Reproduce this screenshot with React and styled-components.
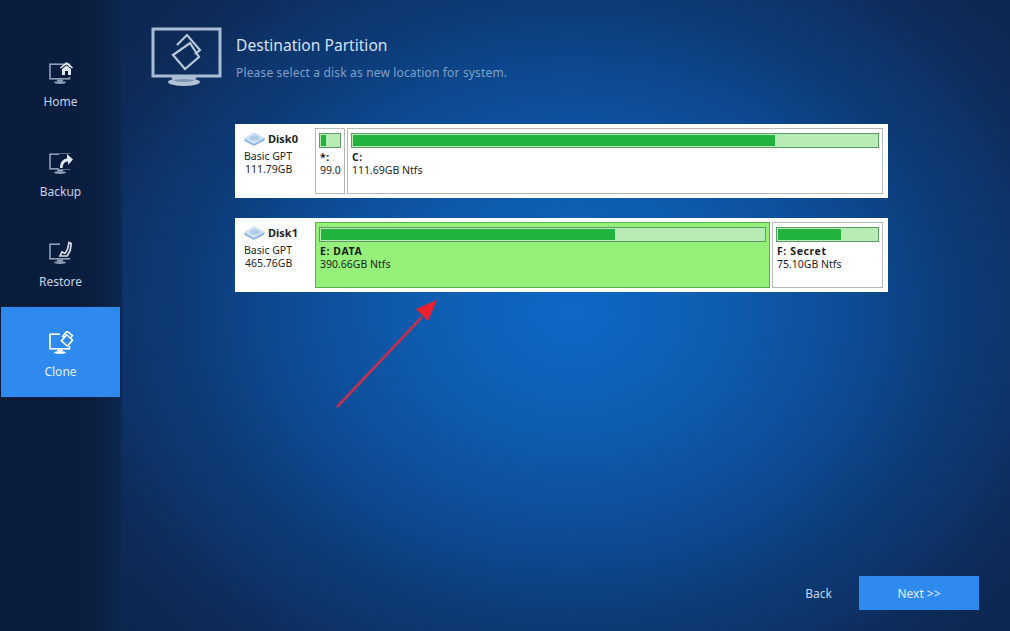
import React from "react";
import styled, { createGlobalStyle } from "styled-components";

const Global = createGlobalStyle`
  html, body { margin: 0; padding: 0; height: 631px; overflow: hidden; background: #0b1c3a; }
  #root { height: 631px; }
`;

const Window = styled.div`
  position: relative;
  width: 1010px;
  height: 631px;
  display: flex;
  overflow: hidden;
  font-family: "Noto Sans", "Open Sans", sans-serif;
`;

const Sidebar = styled.nav`
  width: 122px;
  flex: none;
  padding: 37px 0 0 1px;
  box-sizing: border-box;
  border-right: 2px solid #0d294f;
  background: linear-gradient(90deg, #0a1c3c 0%, #0a1d3e 70%, #0c274d 100%);
`;

const NavItem = styled.div`
  width: 119px;
  height: 90px;
  box-sizing: border-box;
  padding-top: 24px;
  display: flex;
  flex-direction: column;
  align-items: center;
  gap: 8px;
  color: ${p => (p.$active ? "#e6f1ff" : "#c4d3e6")};
  background: ${p => (p.$active ? "#2f8af0" : "transparent")};
  font-size: 12px;
  line-height: 17px;
`;

const Main = styled.main`
  flex: 1;
  display: flex;
  flex-direction: column;
  padding: 27px 31px 21px 29px;
  box-sizing: border-box;
  background:
    radial-gradient(ellipse 500px 400px at 450px 312px, #0f68c6 0%, #0e5cb0 30%, #0d4a92 58%, #0d3a76 78%, rgba(13,48,98,0) 100%),
    radial-gradient(ellipse 640px 520px at 450px 312px, #0d3a76 0%, #0d3369 60%, #0e2348 100%);
`;

const Header = styled.header`
  display: flex;
  align-items: flex-start;
  gap: 13px;
  height: 97px;
`;

const HeaderText = styled.div`
  padding-top: 7px;
`;

const Title = styled.h1`
  margin: 0;
  font-size: 15.6px;
  font-weight: 400;
  line-height: 22px;
  color: #d3e1f3;
`;

const Subtitle = styled.p`
  margin: 9px 0 0;
  font-size: 12px;
  line-height: 16px;
  letter-spacing: 0.16px;
  color: #7fa0c8;
`;

const DiskList = styled.div`
  margin-left: 84px;
  width: 653px;
  display: flex;
  flex-direction: column;
  gap: 20px;
`;

const DiskPanel = styled.section`
  height: 74px;
  box-sizing: border-box;
  background: #fff;
  display: flex;
  padding: 4px 5px 4px 0;
  gap: 2px;
  color: #1d1d1d;
  font-family: "Noto Sans", sans-serif;
  font-size: 10.5px;
  line-height: 13px;
`;

const DiskInfo = styled.div`
  width: 78px;
  flex: none;
  padding: 3px 0 0 9px;
  box-sizing: border-box;
`;

const DiskName = styled.div`
  display: flex;
  align-items: center;
  gap: 3px;
  height: 15px;
  font-weight: 700;
  font-size: 11px;
  margin-bottom: 4px;
`;

const DiskMeta = styled.div`
  white-space: nowrap;
`;

const DiskSize = styled.div`
  padding-left: 1px;
`;

const Partition = styled.div`
  flex: ${p => (p.$width ? `0 0 ${p.$width}px` : "1")};
  min-width: 0;
  box-sizing: border-box;
  border: 1px solid ${p => (p.$selected ? "#5fae4c" : "#b5bab5")};
  background: ${p => (p.$selected ? "#95f07a" : "#fff")};
  padding: 4px 3px 0;
  white-space: nowrap;
`;

const Usage = styled.div`
  height: 15px;
  box-sizing: border-box;
  border: 1px solid #5d9a6a;
  padding: 1px;
  background: #b9ecb4;
  margin-bottom: 3px;
`;

const UsageFill = styled.div`
  height: 100%;
  background: #22b33f;
`;

const PartName = styled.div`
  font-weight: 700;
  letter-spacing: 0.6px;
  padding-left: 1px;
`;

const PartDetail = styled.div`
  overflow: hidden;
  padding-left: 1px;
`;

const Footer = styled.footer`
  margin-top: auto;
  display: flex;
  justify-content: flex-end;
  align-items: center;
  gap: 27px;
  font-size: 12px;
`;

const BackButton = styled.div`
  color: #c4d5ea;
`;

const NextButton = styled.div`
  width: 120px;
  height: 34px;
  display: flex;
  align-items: center;
  justify-content: center;
  background: #2f8af0;
  color: #e0eeff;
`;

const Arrow = styled.svg`
  position: absolute;
  left: 330px;
  top: 295px;
`;

const Monitor = () => (
  <svg width="72" height="60" viewBox="0 0 72 60" style={{ flex: "none" }}>
    <rect x="2" y="2" width="67" height="47" fill="none" stroke="#a9bdd4" strokeWidth="3" />
    <path d="M21 50h24v2H21z" fill="#a9bdd4" />
    <ellipse cx="33" cy="55" rx="16" ry="4" fill="#b2c3d6" />
    <ellipse cx="33" cy="53.500" rx="10" ry="1.500" fill="#7d92ad" />
    <path d="M26 18L36 8l13 15-5 4" fill="none" stroke="#b8c9dc" strokeWidth="2.200" />
    <path d="M22 28L39 16 48 30 34 42z" fill="none" stroke="#b8c9dc" strokeWidth="2.200" />
  </svg>
);

const NavMonitor = ({ color = "#8fa0b6" }) => (
  <>
    <rect x="2" y="3.200" width="19.500" height="14.600" fill="none" stroke={color} strokeWidth="1.600" />
    <path d="M9 18.500h6v1.500H9z" fill={color} />
    <ellipse cx="12" cy="21.500" rx="6" ry="1.400" fill={color} />
  </>
);

const NavIcon = ({ kind, active }) => (
  <svg width="26" height="24" viewBox="0 0 26 24">
    <NavMonitor color={active ? "#fff" : "#8fa0b6"} />
    {kind === "home" && (
      <g>
        <path d="M11 6h15v10H11z" fill="#0a1d3e" />
        <path d="M12 6.500L18.500 1l6.500 5.500-1 1-5.500-4.500-5.500 4.500z" fill="#eef4fb" />
        <path d="M14 8l4.500-3.800L23 8v6h-3v-4h-3v4h-3z" fill="#dfe8f3" />
      </g>
    )}
    {kind === "backup" && (
      <g>
        <path d="M11 3h15v15H11z" fill="#0a1d3e" />
        <path d="M12 17c0-6 3-9 7-9.500V3l6 5.500-5 5.500v-3.500c-3 0-5 2-5.500 6.500z" fill="#dfe8f3" />
      </g>
    )}
    {kind === "restore" && (
      <g>
        <path d="M12 1h12v16H12z" fill="#0a1d3e" />
        <path d="M21 1.500l2.200 1-1 7-3 5.500H12l2-4 3 1.500 2.500-4z" fill="none" stroke="#d6dfea" strokeWidth="1.700" />
      </g>
    )}
    {kind === "clone" && (
      <g>
        <path d="M12 0h14v15H12z" fill="#2f8af0" />
        <rect x="16" y="1.500" width="7" height="7" transform="rotate(40 19.500 5)" fill="none" stroke="#fff" strokeWidth="1.500" />
        <rect x="15" y="5.500" width="8" height="8" transform="rotate(40 19 9.500)" fill="#2f8af0" stroke="#fff" strokeWidth="1.600" />
      </g>
    )}
  </svg>
);

const DiskIcon = () => (
  <svg width="21" height="14" viewBox="0 0 21 14" style={{ flex: "none" }}>
    <path d="M0.500 6.500L10 0.500 20.500 6v2.500L10 14 0.500 9z" fill="#8fb6e2" />
    <path d="M0.500 6.500L10 0.500 20.500 6 10 12z" fill="#d2e3f6" />
    <ellipse cx="10.500" cy="6" rx="5" ry="2.500" fill="#aecbea" />
  </svg>
);

const nav = [
  { kind: "home", label: "Home" },
  { kind: "backup", label: "Backup" },
  { kind: "restore", label: "Restore" },
  { kind: "clone", label: "Clone", active: true },
];

const disks = [
  {
    name: "Disk0",
    size: "111.79GB",
    parts: [
      { name: "*:", detail: "99.00MB", used: 26, width: 30 },
      { name: "C:", detail: "111.69GB Ntfs", used: 80.5 },
    ],
  },
  {
    name: "Disk1",
    size: "465.76GB",
    parts: [
      { name: "E: DATA", detail: "390.66GB Ntfs", used: 66.4, width: 455, selected: true },
      { name: "F: Secret", detail: "75.10GB Ntfs", used: 64 },
    ],
  },
];

export default function App() {
  return (
    <Window>
      <Global />
      <Sidebar>
        {nav.map(n => (
          <NavItem key={n.kind} $active={n.active}>
            <NavIcon kind={n.kind} active={n.active} />
            {n.label}
          </NavItem>
        ))}
      </Sidebar>
      <Main>
        <Header>
          <Monitor />
          <HeaderText>
            <Title>Destination Partition</Title>
            <Subtitle>Please select a disk as new location for system.</Subtitle>
          </HeaderText>
        </Header>
        <DiskList>
          {disks.map(d => (
            <DiskPanel key={d.name}>
              <DiskInfo>
                <DiskName><DiskIcon />{d.name}</DiskName>
                <DiskMeta>Basic GPT</DiskMeta>
                <DiskSize>{d.size}</DiskSize>
              </DiskInfo>
              {d.parts.map(p => (
                <Partition key={p.name} $width={p.width} $selected={p.selected}>
                  <Usage><UsageFill style={{ width: `${p.used}%` }} /></Usage>
                  <PartName>{p.name}</PartName>
                  <PartDetail>{p.detail}</PartDetail>
                </Partition>
              ))}
            </DiskPanel>
          ))}
        </DiskList>
        <Footer>
          <BackButton>Back</BackButton>
          <NextButton>Next &gt;&gt;</NextButton>
        </Footer>
      </Main>
      <Arrow width="120" height="120" viewBox="0 0 120 120">
        <line x1="7" y1="112" x2="92" y2="22" stroke="#c0304f" strokeWidth="2.600" />
        <path d="M107 5L86 14l6 6 6 6z" fill="#ee1f2d" />
      </Arrow>
    </Window>
  );
}
